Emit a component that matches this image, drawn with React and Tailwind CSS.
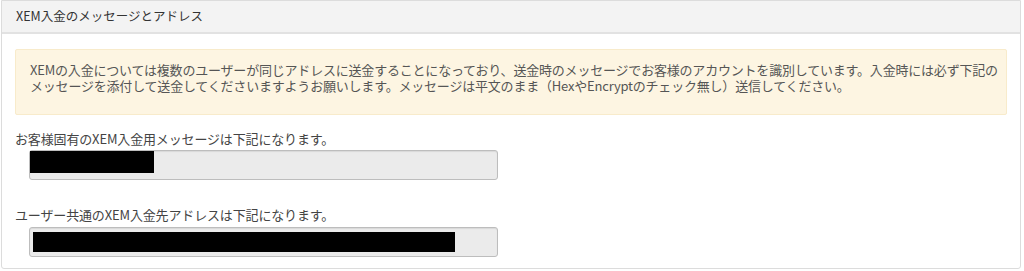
import React from "react";

function MaskedField({ maskWidth, variant }) {
  return (
    <div className="ml-[14px] w-[469px] h-[30px] rounded-[3px] border border-[#bdbdbd] bg-[#ebebeb] shadow-[inset_0_1px_1px_rgba(0,0,0,0.08)]">
      {variant === "message" ? (
        <div className="h-[22px] bg-black" style={{ width: maskWidth }} />
      ) : (
        <div className="ml-[3px] mt-[4px] h-[20px] bg-black" style={{ width: maskWidth }} />
      )}
    </div>
  );
}

export default function App() {
  return (
    <div className="w-[1024px] h-[271px] bg-white font-['Noto_Sans_CJK_JP',sans-serif] text-[#333]">
      <div className="ml-[1px] w-[1020px] h-[269px] border border-[#dcdcdc] rounded-b-[3px] flex flex-col">
        <div className="h-[33px] bg-[#f3f3f3] border-b-2 border-[#e2e2e2] flex items-center pl-[14px] text-[12.5px]">
          XEM入金のメッセージとアドレス
        </div>
        <div className="px-[13px] pt-[15px]">
          <div className="w-[992px] h-[66px] bg-[#fdf5e2] border border-[#f8ebcb] rounded-[2px] px-[14px] pt-[12px] text-[13px] leading-[16px] text-[#555] tracking-[-0.2px]">
            <p className="whitespace-nowrap">
              XEMの入金については複数のユーザーが同じアドレスに送金することになっており、送金時のメッセージでお客様のアカウントを識別しています。入金時には必ず下記の
            </p>
            <p className="whitespace-nowrap">
              メッセージを添付して送金してくださいますようお願いします。メッセージは平文のまま（HexやEncryptのチェック無し）送信してください。
            </p>
          </div>
          <div className="mt-[16px] text-[13px] leading-[16px] text-[#444] tracking-[-0.15px]">
            お客様固有のXEM入金用メッセージは下記になります。
          </div>
          <div className="mt-[3px]">
            <MaskedField maskWidth={124} variant="message" />
          </div>
          <div className="mt-[27px] text-[13px] leading-[16px] text-[#444] tracking-[-0.15px]">
            ユーザー共通のXEM入金先アドレスは下記になります。
          </div>
          <div className="mt-[4px]">
            <MaskedField maskWidth={422} variant="address" />
          </div>
        </div>
      </div>
    </div>
  );
}
